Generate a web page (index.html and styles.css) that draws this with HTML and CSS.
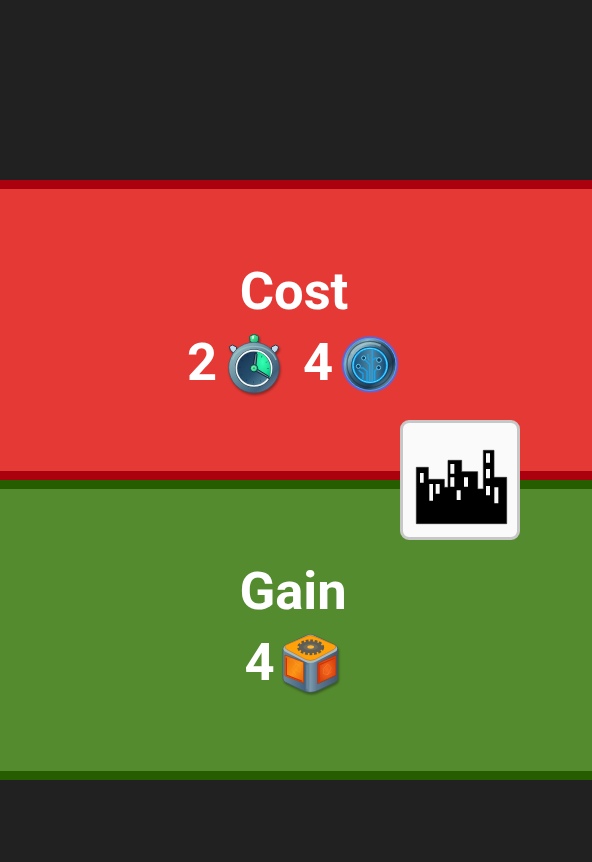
FILE: index.html
```html
<!DOCTYPE html>
<html lang="en">
<head>
<meta charset="utf-8">
<title>Exchange</title>
<link rel="stylesheet" href="styles.css">
</head>
<body>
<main class="exchange">
  <section class="panel cost">
    <h2 class="title">Cost</h2>
    <div class="items">
      <div class="item"><span class="amount">2</span>
        <svg class="icon" viewBox="12 21 180 180">
          <defs>
            <linearGradient id="rim" x1="0" y1="0" x2="1" y2="1"><stop offset="0" stop-color="#a4cbd0"/><stop offset=".4" stop-color="#6a90a0"/><stop offset=".75" stop-color="#3f5f7a"/><stop offset="1" stop-color="#8598aa"/></linearGradient>
            <linearGradient id="face" x1="0" y1="0" x2="1" y2="1"><stop offset="0" stop-color="#132f4d"/><stop offset=".55" stop-color="#274e6d"/><stop offset="1" stop-color="#6a9aae"/></linearGradient>
            <linearGradient id="gem" x1="0" y1="0" x2="1" y2="1"><stop offset="0" stop-color="#7affb5"/><stop offset="1" stop-color="#05a765"/></linearGradient>
            <radialGradient id="sector" cx=".5" cy=".4" r=".7"><stop offset="0" stop-color="#35ffb0"/><stop offset=".6" stop-color="#1ce298"/><stop offset="1" stop-color="#08b47f"/></radialGradient>
          </defs>
          <g stroke="#263b4f" stroke-width="3">
            <path d="M38 74l10-8 13 14-11 10zM165 74l-10-8-13 14 11 10z" fill="#7695a6"/>
            <path d="M91 42h23l3 13H88z" fill="#79a9a8"/>
            <path d="M28 59l9-5 13 6-1 10-9 8-9-9zM176 59l-9-5-13 6 1 10 9 8 9-9z" fill="#c6dcec"/>
            <path d="M89 28l13-7 14 7-1 13-7 9H98l-8-9z" fill="url(#gem)" stroke="#075f4c"/>
          </g>
          <circle cx="102" cy="122" r="76" fill="url(#rim)" stroke="#3a5162" stroke-width="2"/>
          <path d="M38 98C53 47 147 43 168 99" fill="none" stroke="#a1c4c8" stroke-width="4" opacity=".7"/>
          <circle cx="102" cy="124" r="57" fill="#213b50"/>
          <circle cx="102" cy="124" r="53" fill="url(#face)" stroke="#f3f6f3" stroke-width="5"/>
          <path d="M103 124L112 74C143 81 158 115 150 152z" fill="url(#sector)"/>
          <circle cx="102" cy="124" r="42" fill="none" stroke="#0b253e" stroke-width="6" stroke-dasharray="2 20" opacity=".5"/>
          <path d="M99 119l7-42 5 5-4 41zM106 123l40 25 2 7-44-25z" fill="#718b98" stroke="#102639" stroke-width="3"/>
          <circle cx="102" cy="124" r="11" fill="url(#gem)" stroke="#073f42" stroke-width="3"/>
          <circle cx="102" cy="124" r="5" fill="#19b472" stroke="#a0ffcd" stroke-width="2"/>
          <path d="M96 28l6-2v8l-5 3z" fill="#d0ffe0"/>
        </svg>
      </div>
      <div class="item"><span class="amount">4</span>
        <svg class="icon coin" viewBox="15 21 180 180">
          <defs>
            <linearGradient id="coinrim" x1="0" y1="0" x2="1" y2="1"><stop offset="0" stop-color="#233c52"/><stop offset=".24" stop-color="#8fb6c4"/><stop offset=".42" stop-color="#3d647c"/><stop offset=".7" stop-color="#203b54"/><stop offset=".88" stop-color="#6892a8"/><stop offset="1" stop-color="#1f3a55"/></linearGradient>
            <linearGradient id="coinface"><stop offset="0" stop-color="#14507c"/><stop offset=".55" stop-color="#5688a2"/><stop offset="1" stop-color="#124570"/></linearGradient>
          </defs>
          <circle cx="105" cy="112" r="86" fill="#5968e0" opacity=".4"/>
          <circle cx="105" cy="112" r="83" fill="#5368e8"/>
          <circle cx="105" cy="112" r="78" fill="url(#coinrim)" stroke="#5aa4e8" stroke-width="3"/>
          <circle cx="105" cy="112" r="69" fill="none" stroke="#14263a" stroke-width="4" opacity=".5"/>
          <path d="M49 80C64 51 104 40 137 56" fill="none" stroke="#b2cfd3" stroke-width="7" opacity=".55"/>
          <circle cx="105" cy="115" r="56" fill="#102d47"/>
          <circle cx="105" cy="115" r="51" fill="url(#coinface)" stroke="#0b91e0" stroke-width="7"/>
          <circle cx="105" cy="115" r="51" fill="none" stroke="#5cdcff" stroke-width="3"/>
          <g fill="none" stroke="#18a4ec" stroke-width="4">
            <path d="M96 162v-29l-12-10h-7M104 164v-52l-10-10-5-3M112 164V65M119 160v-27l8-9M103 101l-4-8V80M113 100l9-7h4M84 157v-17l-13-10"/>
            <g fill="#123955" stroke="#5ccbf6" stroke-width="3"><circle cx="86" cy="93" r="6"/><circle cx="132" cy="99" r="7"/><circle cx="70" cy="118" r="6"/><circle cx="131" cy="122" r="6"/></g>
          </g>
        </svg>
      </div>
    </div>
  </section>
  <section class="panel gain">
    <h2 class="title">Gain</h2>
    <div class="items">
      <div class="item"><span class="amount">4</span>
        <svg class="icon" viewBox="15 26 180 180">
          <defs>
            <linearGradient id="steel"><stop offset="0" stop-color="#6e899a"/><stop offset=".4" stop-color="#42627f"/><stop offset=".5" stop-color="#7c99ab"/><stop offset=".62" stop-color="#5c7890"/><stop offset="1" stop-color="#44586f"/></linearGradient>
            <linearGradient id="left" x1="0" y1="0" x2="1" y2="1"><stop offset="0" stop-color="#e86c08"/><stop offset=".55" stop-color="#fb9415"/><stop offset="1" stop-color="#e8600a"/></linearGradient>
            <radialGradient id="right"><stop offset="0" stop-color="#f86a22"/><stop offset="1" stop-color="#d8430c"/></radialGradient>
          </defs>
          <path d="M24 71q0-8 8-12l63-29q11-5 22 0l63 29q8 4 8 12v88q0 8-8 12l-50 24q-24 12-48 0l-50-24q-8-4-8-12z" fill="url(#steel)" stroke="#42586a" stroke-width="2"/>
          <path d="M25 70q0-7 9-11l61-28q11-5 22 0l61 28q9 4 9 11t-9 11l-56 28q-16 8-32 0L34 81q-9-4-9-11z" fill="#a9bbc0"/>
          <path d="M35 58l60-25q11-5 22 0l60 25q10 6 0 14l-56 30q-15 7-30 0L35 72q-10-8 0-14z" fill="#ffa20a" stroke="#c9720c" stroke-width="2"/>
          <ellipse cx="107" cy="66" rx="36" ry="19" fill="none" stroke="#5d5b4f" stroke-width="9" stroke-dasharray="8 5"/>
          <ellipse cx="107" cy="66" rx="35" ry="18" fill="#5f5e56"/>
          <ellipse cx="107" cy="65" rx="22" ry="10" fill="#716b5c"/>
          <ellipse cx="107" cy="65" rx="10" ry="5" fill="#ffb632"/>
          <path d="M30 89l56 22v62l-56-22z" fill="url(#left)" stroke="#a13a16" stroke-width="2"/>
          <path d="M128 114l55-24v60l-55 25z" fill="url(#right)" stroke="#9a3417" stroke-width="2"/>
          <path d="M34 97v52l48 19M132 169v-50l48-21" fill="none" stroke="#d2300a" stroke-width="4"/>
          <path d="M43 104l12-3 8 14-10 15M63 115l13 8-1 18-15-10M51 132l12 18M145 131l13-15 11 12-12 20-12-3zM157 148l13-9" fill="none" stroke="#ffb045" stroke-width="2" opacity=".35"/>
          <path d="M96 118v73" stroke="#87a0b2" stroke-width="4" opacity=".45"/>
        </svg>
      </div>
    </div>
  </section>
  <div class="badge">
    <svg viewBox="27 27 342 342">
      <path d="M67 160h36v36h48v24h11v-81h41v34h48v52h17V109h32v81h38v139H67z" stroke="#282828" stroke-width="2"/>
      <path d="M78 177h11v29H78zM106 210h11v50h-11zM125 210h12v29h-12zM169 150h12v29h-12zM169 190h12v28h-12zM188 229h12v29h-12zM210 190h12v28h-12zM276 118h12v28h-12zM276 165h12v28h-12zM276 216h12v28h-12zM301 220h12v48h-12z" fill="#fafafa"/>
    </svg>
  </div>
</main>
</body>
</html>
```

FILE: styles.css
```css
* { box-sizing: border-box; }

body {
  margin: 0;
  min-height: 862px;
  padding-top: 180px;
  background: #212121;
  color: #fff;
  font-family: Roboto, sans-serif;
}

.exchange { position: relative; }

.panel {
  height: 300px;
  padding-top: 71px;
  border-width: 9px 0;
  border-style: solid;
}

.cost { background: #e53935; border-color: #ab000d; }
.gain { background: #558b2f; border-color: #255d00; }

.title {
  margin: 0;
  padding-right: 4px;
  font-size: 52.5px;
  line-height: 63px;
  font-weight: 700;
  text-align: center;
}

.gain .title { padding-right: 6px; }

.items {
  display: flex;
  justify-content: center;
  gap: 19px;
  height: 72px;
  padding-right: 5px;
}

.item { display: flex; gap: 8px; }

.gain .items { padding-right: 8px; }

.amount {
  width: 29px;
  font-size: 52.5px;
  line-height: 79px;
  font-weight: 700;
}

.gain .item { gap: 6px; }

.icon {
  width: 60px;
  height: 60px;
  margin-top: 11px;
  filter: drop-shadow(1px 2px 1px rgba(0, 0, 0, .35));
}

.coin { filter: none; overflow: visible; }

.badge {
  position: absolute;
  top: 240px;
  right: 72px;
  width: 120px;
  height: 120px;
  border: 3px solid #c7c7c7;
  border-radius: 9px;
  background: #fafafa;
}

.badge svg { display: block; width: 100%; height: 100%; }
```
